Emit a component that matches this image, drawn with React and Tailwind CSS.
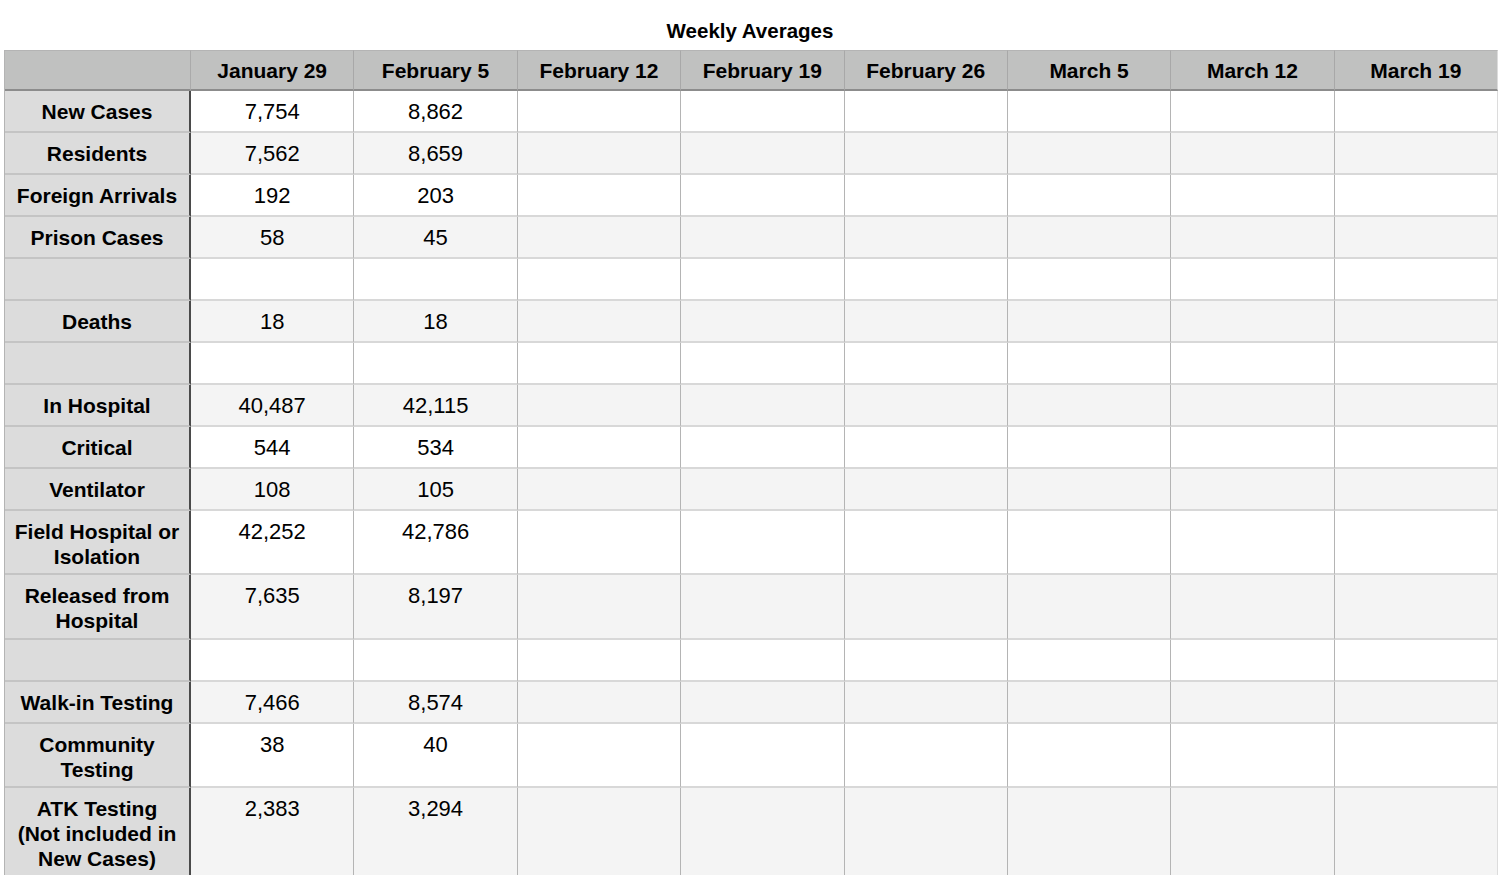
import React from "react";

const cols = ["January 29", "February 5", "February 12", "February 19", "February 26", "March 5", "March 12", "March 19"];

const rows = [
  { label: ["New Cases"], vals: ["7,754", "8,862"], h: 42 },
  { label: ["Residents"], vals: ["7,562", "8,659"], h: 42 },
  { label: ["Foreign Arrivals"], vals: ["192", "203"], h: 42 },
  { label: ["Prison Cases"], vals: ["58", "45"], h: 42 },
  { label: [], vals: [], h: 42 },
  { label: ["Deaths"], vals: ["18", "18"], h: 42 },
  { label: [], vals: [], h: 42 },
  { label: ["In Hospital"], vals: ["40,487", "42,115"], h: 42 },
  { label: ["Critical"], vals: ["544", "534"], h: 42 },
  { label: ["Ventilator"], vals: ["108", "105"], h: 42 },
  { label: ["Field Hospital or", "Isolation"], vals: ["42,252", "42,786"], h: 64 },
  { label: ["Released from", "Hospital"], vals: ["7,635", "8,197"], h: 65 },
  { label: [], vals: [], h: 42 },
  { label: ["Walk-in Testing"], vals: ["7,466", "8,574"], h: 42 },
  { label: ["Community", "Testing"], vals: ["38", "40"], h: 64 },
  { label: ["ATK Testing", "(Not included in", "New Cases)"], vals: ["2,383", "3,294"], h: 92 },
];

export default function App() {
  return (
    <div className="w-[1500px] h-[875px] overflow-hidden bg-white text-black" style={{ fontFamily: '"Liberation Sans", Arial, sans-serif' }}>
      <div className="h-[50px] pt-[19px] text-center text-[20.5px] leading-[24px] font-bold">Weekly Averages</div>
      <div className="ml-[4px] w-[1494px] grid grid-cols-[186px_repeat(8,1fr)] border-l border-[#b4b4b4]">
        <div className="h-[41px] bg-[#c0c1c0] border-t border-[#b4b4b4] border-b-2 border-b-[#8c8c8c] border-r border-r-[#aaaaaa]" />
        {cols.map((c, i) => (
          <div key={c} className={`h-[41px] bg-[#c0c1c0] border-t border-[#b4b4b4] border-b-2 border-b-[#8c8c8c] ${i === 7 ? "border-r border-r-[#dcdcdc]" : "border-r border-r-[#a8a8a8]"} flex items-center justify-center text-[21px] font-bold pt-[1px]`}>
            {c}
          </div>
        ))}
        {rows.map((r, ri) => {
          const bg = ri % 2 === 0 ? "bg-white" : "bg-[#f4f4f4]";
          return (
            <React.Fragment key={ri}>
              <div style={{ height: r.h }} className="bg-[#dcdcdc] border-r-2 border-r-[#4a4a4a] border-b-2 border-b-[#c4c4c4] pt-[8px] text-center text-[21px] leading-[25px] font-bold">
                {r.label.map((l, k) => (
                  <div key={k}>{l}</div>
                ))}
              </div>
              {cols.map((c, ci) => (
                <div key={ci} style={{ height: r.h }} className={`${bg} border-b-2 border-b-[#d8d8d8] ${ci === 7 ? "border-r border-r-[#dcdcdc]" : "border-r border-r-[#b4b4b4]"} pt-[8px] text-center text-[22px] leading-[25px]`}>
                  {r.vals[ci] || ""}
                </div>
              ))}
            </React.Fragment>
          );
        })}
      </div>
    </div>
  );
}
